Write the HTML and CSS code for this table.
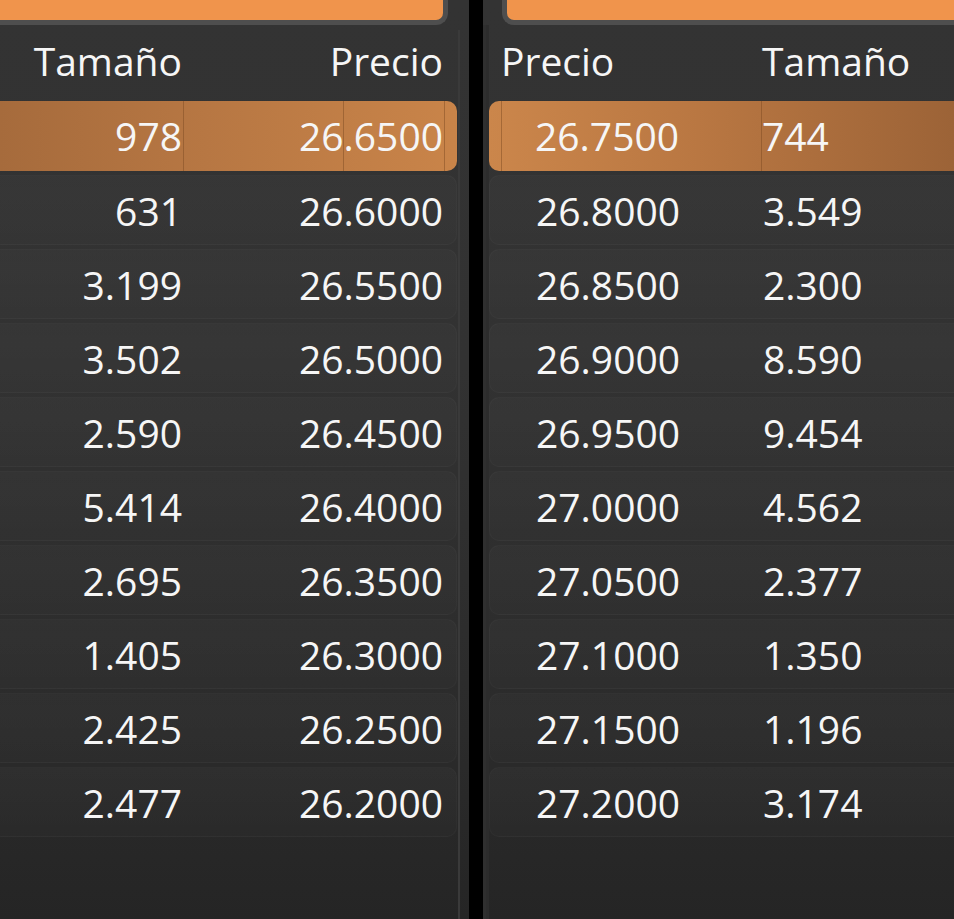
FILE: index.html
```html
<!DOCTYPE html>
<html lang="es">
<head>
<meta charset="utf-8">
<title>Libro de órdenes</title>
<link rel="stylesheet" href="styles.css">
</head>
<body>
<div class="book">
  <section class="panel panel-bid">
    <div class="topbar"><div class="tab"></div></div>
    <div class="panel-body">
      <div class="table">
        <div class="head">
          <span class="c-size">Tamaño</span>
          <span class="c-price">Precio</span>
        </div>
        <div class="row active"><span class="c-size">978</span><span class="c-price">26.6500</span></div>
        <div class="row"><span class="c-size">631</span><span class="c-price">26.6000</span></div>
        <div class="row"><span class="c-size">3.199</span><span class="c-price">26.5500</span></div>
        <div class="row"><span class="c-size">3.502</span><span class="c-price">26.5000</span></div>
        <div class="row"><span class="c-size">2.590</span><span class="c-price">26.4500</span></div>
        <div class="row"><span class="c-size">5.414</span><span class="c-price">26.4000</span></div>
        <div class="row"><span class="c-size">2.695</span><span class="c-price">26.3500</span></div>
        <div class="row"><span class="c-size">1.405</span><span class="c-price">26.3000</span></div>
        <div class="row"><span class="c-size">2.425</span><span class="c-price">26.2500</span></div>
        <div class="row"><span class="c-size">2.477</span><span class="c-price">26.2000</span></div>
      </div>
      <div class="strip"></div>
    </div>
  </section>
  <section class="panel panel-ask">
    <div class="topbar"><div class="tab"></div></div>
    <div class="panel-body">
      <div class="strip"></div>
      <div class="table">
        <div class="head">
          <span class="c-price">Precio</span>
          <span class="c-size">Tamaño</span>
        </div>
        <div class="row active"><span class="c-price">26.7500</span><span class="c-size">744</span></div>
        <div class="row"><span class="c-price">26.8000</span><span class="c-size">3.549</span></div>
        <div class="row"><span class="c-price">26.8500</span><span class="c-size">2.300</span></div>
        <div class="row"><span class="c-price">26.9000</span><span class="c-size">8.590</span></div>
        <div class="row"><span class="c-price">26.9500</span><span class="c-size">9.454</span></div>
        <div class="row"><span class="c-price">27.0000</span><span class="c-size">4.562</span></div>
        <div class="row"><span class="c-price">27.0500</span><span class="c-size">2.377</span></div>
        <div class="row"><span class="c-price">27.1000</span><span class="c-size">1.350</span></div>
        <div class="row"><span class="c-price">27.1500</span><span class="c-size">1.196</span></div>
        <div class="row"><span class="c-price">27.2000</span><span class="c-size">3.174</span></div>
      </div>
    </div>
  </section>
</div>
</body>
</html>
```
FILE: styles.css
```css
* { box-sizing: border-box; }

html, body {
  margin: 0;
  padding: 0;
  background: #000;
}

body {
  width: 954px;
  height: 919px;
  overflow: hidden;
  font-family: "Open Sans", "Noto Sans", sans-serif;
  color: #f6f6f6;
}

.book {
  display: flex;
  gap: 14px;
  height: 919px;
}

.panel {
  height: 919px;
  display: flex;
  flex-direction: column;
  background: linear-gradient(180deg, #333333 0%, #323232 40%, #2b2b2b 80%, #252525 100%);
}

.panel-bid { width: 469px; }
.panel-ask { flex: 1; }

.topbar {
  height: 25px;
  flex: none;
  display: flex;
}

.tab {
  height: 25px;
  background: #f0944c;
  border-bottom: 5px solid #4e4e4e;
}

.panel-bid .tab {
  width: 448px;
  border-right: 5px solid #4e4e4e;
  border-bottom-right-radius: 12px;
}

.panel-ask .topbar { justify-content: flex-end; }

.panel-ask .tab {
  width: 452px;
  border-left: 5px solid #4e4e4e;
  border-bottom-left-radius: 12px;
}

.panel-body {
  flex: 1;
  display: flex;
}

.panel-bid .table { width: 457px; }
.panel-ask .table { flex: 1; }

.strip {
  flex: none;
}

.panel-bid .strip {
  margin-top: 5px;
  margin-left: 1px;
  width: 11px;
  border-left: 2px solid #3a3a3a;
}

.panel-ask .strip {
  width: 6px;
  border-right: 3px solid #2c2c2c;
  background: #2f2f2f;
}

.head {
  height: 72px;
  line-height: 72px;
  font-size: 39px;
  display: flex;
  white-space: nowrap;
}

.row {
  margin-top: 4px;
  height: 70px;
  line-height: 70px;
  font-size: 39px;
  display: flex;
  white-space: nowrap;
  background: linear-gradient(180deg, rgba(255,255,255,0.022), rgba(255,255,255,0.01));
  border: 1px solid rgba(255,255,255,0.022);
}

.row > span, .head > span { display: block; }

/* Bid side (left) */
.panel-bid .row {
  border-left: none;
  border-radius: 0 10px 10px 0;
}

.panel-bid .c-size {
  width: 183px;
  text-align: right;
  padding-right: 1px;
}

.panel-bid .c-price {
  width: 261px;
  text-align: right;
  padding-right: 1px;
}

.panel-bid .row.active {
  border: none;
  background:
    linear-gradient(90deg, transparent 183px, rgba(120,70,30,0.45) 183px, rgba(120,70,30,0.45) 184px, transparent 184px),
    linear-gradient(90deg, transparent 343px, rgba(120,70,30,0.45) 343px, rgba(120,70,30,0.45) 344px, transparent 344px),
    linear-gradient(90deg, transparent 444px, rgba(120,70,30,0.45) 444px, rgba(120,70,30,0.45) 445px, transparent 445px),
    linear-gradient(90deg, #a66b3c 0%, #b77743 45%, #c98449 100%);
}

/* Ask side (right) */
.panel-ask .row {
  border-right: none;
  border-radius: 10px 0 0 10px;
}

.panel-ask .head .c-price {
  width: 273px;
  padding-left: 12px;
}

.panel-ask .row .c-price {
  width: 273px;
  padding-left: 46px;
}

.panel-ask .c-size {
  padding-left: 0;
}

.panel-ask .row.active {
  border: none;
  background:
    linear-gradient(90deg, transparent 12px, rgba(120,70,30,0.45) 12px, rgba(120,70,30,0.45) 13px, transparent 13px),
    linear-gradient(90deg, transparent 272px, rgba(120,70,30,0.45) 272px, rgba(120,70,30,0.45) 273px, transparent 273px),
    linear-gradient(90deg, #cb864b 0%, #b97742 45%, #9c6337 100%);
}
```
